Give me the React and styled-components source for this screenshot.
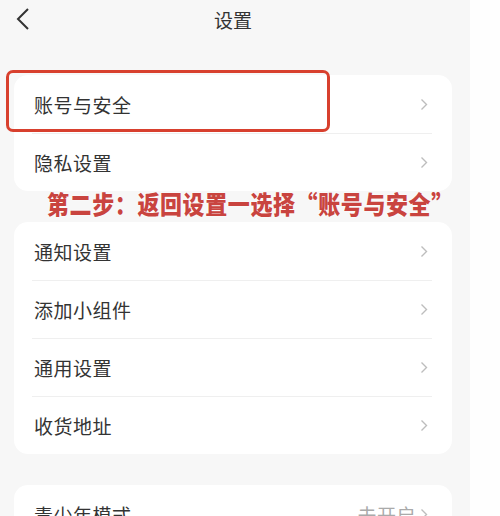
import styled, { createGlobalStyle } from 'styled-components';

const GlobalStyle = createGlobalStyle`
  html, body {
    margin: 0;
    padding: 0;
    background: #fefefe;
  }
  body {
    font-family: 'Noto Sans CJK SC', 'Noto Sans', sans-serif;
    color: #333;
  }
`;

const Screen = styled.div`
  width: 470px;
  height: 516px;
  overflow: hidden;
  background: #f7f7f7;
`;

const Header = styled.header`
  position: relative;
  height: 38px;
  display: flex;
  align-items: center;
  justify-content: center;
`;

const BackButton = styled.div`
  position: absolute;
  left: 14px;
  top: 6px;
  width: 18px;
  height: 26px;
  display: flex;
  align-items: center;
  justify-content: center;
`;

const Title = styled.h1`
  margin: 0;
  font-size: 19px;
  font-weight: 400;
  color: #333;
  transform: translateX(-2px);
`;

const Content = styled.main`
  padding: 37px 18px 0 14px;
  display: flex;
  flex-direction: column;
  gap: 31px;
`;

const Group = styled.div`
  position: relative;
`;

const Card = styled.section`
  background: #fff;
  border-radius: 14px;
  display: flex;
  flex-direction: column;
`;

const Row = styled.div`
  position: relative;
  height: 58px;
  display: flex;
  align-items: center;
  justify-content: space-between;
  padding: 0 24px 0 20px;
  & + &::before {
    content: '';
    position: absolute;
    top: 0;
    left: 18px;
    right: 20px;
    height: 1px;
    background: #efefef;
  }
`;

const Label = styled.span`
  font-size: 19px;
  color: #333;
  letter-spacing: 0.5px;
`;

const Trailing = styled.span`
  display: flex;
  align-items: center;
  gap: 4px;
`;

const Value = styled.span`
  font-size: 19px;
  color: #aaa;
  letter-spacing: 0.5px;
`;

const Highlight = styled.div`
  position: absolute;
  left: -8px;
  top: -5px;
  width: 318px;
  height: 56px;
  border: 3px solid #d8402e;
  border-radius: 7px;
  pointer-events: none;
`;

const Caption = styled.div`
  position: absolute;
  left: 33px;
  top: 109px;
  font-size: 22px;
  font-weight: 900;
  color: #c9443f;
  letter-spacing: 0.6px;
  white-space: nowrap;
  transform: scaleY(1.15);
  transform-origin: left top;
  text-shadow: 0 0 2px #fff;
`;

const Chevron = () => (
  <svg width="8" height="13" viewBox="0 0 8 13">
    <path d="M1.5 1.5 L6.5 6.5 L1.5 11.5" fill="none" stroke="#bdbdbd" strokeWidth="1.4" />
  </svg>
);

const BackIcon = () => (
  <svg width="14" height="24" viewBox="0 0 14 24">
    <path d="M12 2 L2 12 L12 22" fill="none" stroke="#333" strokeWidth="2" strokeLinejoin="miter" />
  </svg>
);

const Item = ({ label, value, children }) => (
  <Row>
    {children}
    <Label>{label}</Label>
    <Trailing>
      {value && <Value>{value}</Value>}
      <Chevron />
    </Trailing>
  </Row>
);

export default function App() {
  return (
    <>
      <GlobalStyle />
      <Screen>
        <Header>
          <BackButton>
            <BackIcon />
          </BackButton>
          <Title>设置</Title>
        </Header>
        <Content>
          <Group>
            <Card>
              <Item label="账号与安全">
                <Highlight />
              </Item>
              <Item label="隐私设置" />
            </Card>
            <Caption>第二步：返回设置一选择“账号与安全”</Caption>
          </Group>
          <Card>
            <Item label="通知设置" />
            <Item label="添加小组件" />
            <Item label="通用设置" />
            <Item label="收货地址" />
          </Card>
          <Card>
            <Item label="青少年模式" value="未开启" />
          </Card>
        </Content>
      </Screen>
    </>
  );
}
